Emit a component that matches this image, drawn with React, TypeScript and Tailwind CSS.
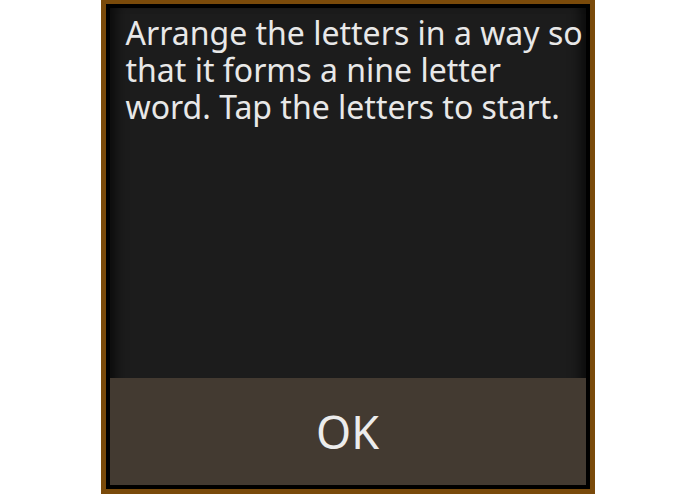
export default function App() {
  return (
    <div className="w-[695px] h-[494px] bg-white flex justify-center">
      <div className="w-[494px] h-[494px] bg-[#7a4a0a] pt-[4px] px-[5px] pb-[5px] flex">
        <div className="flex-1 bg-black p-[4px] flex">
          <div className="flex-1 flex flex-col bg-[#1c1c1c] shadow-[inset_14px_0_12px_-8px_rgba(0,0,0,0.6),inset_-14px_0_12px_-8px_rgba(0,0,0,0.6)]">
            <p
              className="flex-1 pl-[16px] pr-[2px] pt-[6px] text-[32px] leading-[37px] text-[#e8e8e8]"
              style={{ fontFamily: '"Noto Sans", "Open Sans", sans-serif' }}
            >
              Arrange the letters in a way so that it forms a nine letter word. Tap the letters to start.
            </p>
            <button
              className="h-[107px] bg-[#433a31] text-[#ececec] text-[45px] flex items-center justify-center"
              style={{ fontFamily: '"Noto Sans", "Open Sans", sans-serif' }}
            >
              OK
            </button>
          </div>
        </div>
      </div>
    </div>
  );
}
